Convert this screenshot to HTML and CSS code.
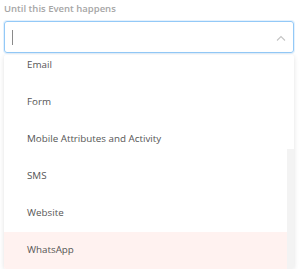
FILE: index.html
```html
<!DOCTYPE html>
<html lang="en">
<head>
    <meta charset="UTF-8">
    <meta name="viewport" content="width=device-width, initial-scale=1.0">
    <title>Event Select</title>
    <link rel="stylesheet" href="styles.css">
</head>
<body>
    <div class="field">
        <label class="field-label">Until this Event happens</label>

        <!-- Select box (open) -->
        <div class="select-box">
            <span class="caret"></span>
            <svg class="chevron" width="10" height="6" viewBox="0 0 10 6">
                <path d="M1 5.5 L5 1.5 L9 5.5" fill="none" stroke="#c4c4c4" stroke-width="1.1"/>
            </svg>
        </div>

        <!-- Dropdown list -->
        <div class="dropdown">
            <ul class="options">
                <li>Email</li>
                <li>Form</li>
                <li>Mobile Attributes and Activity</li>
                <li>SMS</li>
                <li>Website</li>
                <li class="active">WhatsApp</li>
            </ul>
            <div class="scroll-track"></div>
        </div>
    </div>
</body>
</html>
```

FILE: styles.css
```css
body {
    font-family: 'Open Sans', 'Noto Sans', sans-serif;
    background-color: #ffffff;
    margin: 0;
    padding: 0;
}
.field {
    padding: 3px 6px 0 4px;
}
.field-label {
    display: block;
    font-size: 9.5px;
    font-weight: 600;
    color: #a6a6a6;
    line-height: 12px;
    height: 18px;
}
.select-box {
    position: relative;
    height: 30px;
    border: 1px solid #93c9f7;
    border-radius: 3px;
    box-shadow: 0 0 0 1px rgba(147, 201, 247, 0.25);
    display: flex;
    align-items: center;
    padding-left: 7px;
}
.caret {
    display: block;
    width: 1px;
    height: 15px;
    background-color: #8a8a8a;
}
.chevron {
    margin-left: auto;
    margin-right: 7px;
    margin-top: 2px;
}
.dropdown {
    position: relative;
    margin-top: 2px;
    height: 214px;
    overflow: hidden;
    border-radius: 2px;
    background-color: #ffffff;
    box-shadow: 0 1px 5px rgba(0, 0, 0, 0.12);
    display: flex;
}
.options {
    list-style: none;
    margin: -8px 0 0 0;
    padding: 0;
    flex: 1;
}
.options li {
    height: 37px;
    line-height: 36px;
    padding-left: 23px;
    font-size: 9.8px;
    color: #555555;
}
.options li.active {
    background-color: #fff2f0;
}
.scroll-track {
    width: 7px;
    margin-top: 94px;
    background-color: #f3f3f3;
}
```
